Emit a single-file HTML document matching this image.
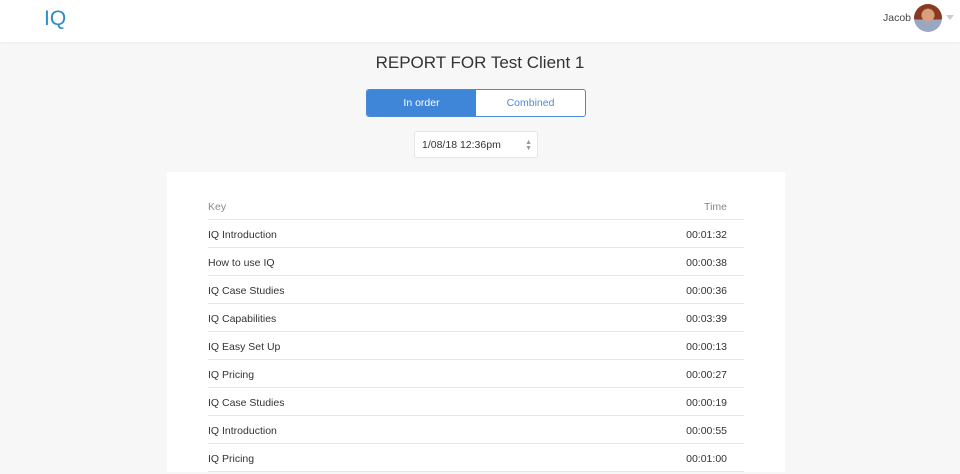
<!DOCTYPE html>
<html><head><style>
*{box-sizing:border-box;margin:0;padding:0}
body{width:960px;height:469px;overflow:hidden;background:#f7f7f7;font-family:"Liberation Sans",sans-serif;color:#333}
.top{position:absolute;left:0;top:0;width:960px;height:42px;background:#fff;box-shadow:0 1px 2px rgba(0,0,0,.05)}
.logo{position:absolute;left:44px;top:7px;font-size:21px;color:#2a8fc6}
.name{position:absolute;left:883px;top:12px;font-size:10.5px;color:#444}
.av{position:absolute;left:914px;top:4px;width:28px;height:28px;border-radius:50%;background:radial-gradient(circle at 50% 40%,#d9a07d 0 6px,transparent 7px),linear-gradient(#8a3a1e 0 55%,#9aa7c2 55%);}
.caret{position:absolute;left:946px;top:15px;border:4px solid transparent;border-top:5px solid #ccc}
h1{position:absolute;left:0;width:960px;top:53px;text-align:center;font-size:17px;font-weight:normal;color:#333}
.tog{position:absolute;left:366px;top:89px;width:220px;height:28px;border:1px solid #4a8ad6;border-radius:3px;display:flex;font-size:10.5px;overflow:hidden;background:#fff}
.tog div{flex:1;text-align:center;line-height:26px;color:#4a8ad6}
.tog .on{background:#3f86d8;color:#fff}
.sel{position:absolute;left:414px;top:131px;width:124px;height:27px;background:#fff;border:1px solid #e6e6e6;border-radius:3px;font-size:10.5px;line-height:27px;padding-left:7px;color:#333}
.sel span{position:absolute;right:5px;font-size:7px;color:#999;line-height:6px;top:8px}
.card{position:absolute;left:167px;top:172px;width:618px;height:300px;background:#fff}
.row{position:absolute;left:41px;width:536px;height:28px;font-size:10.5px;line-height:30px;border-bottom:1px solid #e6e6e6}
.row b{font-weight:normal;position:absolute;right:17px;top:0}
.hd{color:#888}
</style></head><body>
<div class="top"><div class="logo">IQ</div><div class="name">Jacob</div><div class="av"></div><div class="caret"></div></div>
<h1>REPORT FOR Test Client 1</h1>
<div class="tog"><div class="on">In order</div><div>Combined</div></div>
<div class="sel">1/08/18 12:36pm<span>▲<br>▼</span></div>
<div class="card">
<div class="row hd" style="top:20px">Key<b>Time</b></div>
<div class="row" style="top:48px">IQ Introduction<b>00:01:32</b></div>
<div class="row" style="top:76px">How to use IQ<b>00:00:38</b></div>
<div class="row" style="top:104px">IQ Case Studies<b>00:00:36</b></div>
<div class="row" style="top:132px">IQ Capabilities<b>00:03:39</b></div>
<div class="row" style="top:160px">IQ Easy Set Up<b>00:00:13</b></div>
<div class="row" style="top:188px">IQ Pricing<b>00:00:27</b></div>
<div class="row" style="top:216px">IQ Case Studies<b>00:00:19</b></div>
<div class="row" style="top:244px">IQ Introduction<b>00:00:55</b></div>
<div class="row" style="top:272px">IQ Pricing<b>00:01:00</b></div>
</div>
</body></html>
